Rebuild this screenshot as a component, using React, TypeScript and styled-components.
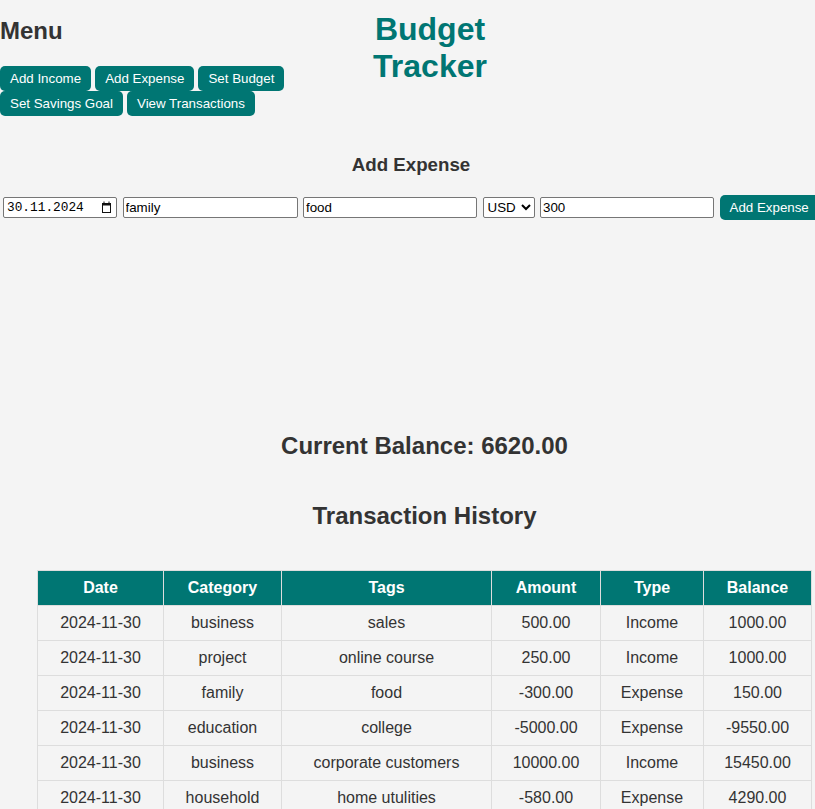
import React from "react";
import styled, { createGlobalStyle } from "styled-components";

const TEAL = "#007673";

const GlobalStyle = createGlobalStyle`
    html, body {
        margin: 0;
        padding: 0;
        overflow: hidden;
        background: #f4f4f4;
        font-family: "Liberation Sans", Arial, sans-serif;
        color: #333;
    }
`;

const Page = styled.div`
    width: 849px;
`;

const Header = styled.header`
    display: flex;
    align-items: flex-start;
`;

const Sidebar = styled.nav`
    width: 290px;

    h2 {
        font-size: 24px;
        margin: 17px 0 21px;
        color: #333;
    }
`;

const MenuButtons = styled.div`
    display: flex;
    flex-wrap: wrap;
    gap: 0 4px;
`;

const Button = styled.button`
    background: ${TEAL};
    color: #fff;
    border: none;
    border-radius: 5px;
    padding: 5px 10px;
    font-family: "Liberation Sans", Arial, sans-serif;
    font-size: 13.33px;
    line-height: 15px;
    cursor: pointer;
`;

const TitleWrap = styled.div`
    flex: 0 0 280px;
    display: flex;
    justify-content: center;
`;

const Title = styled.h1`
    width: min-content;
    margin: 11px 0 0;
    font-size: 32px;
    text-align: center;
    color: ${TEAL};
`;

const FormSection = styled.section`
    margin-top: 38px;

    h3 {
        width: 822px;
        text-align: center;
        font-size: 18.72px;
        margin: 0 0 19px;
    }
`;

const FormRow = styled.div`
    display: flex;
    align-items: center;
    gap: 5.5px;
    padding-left: 3px;
`;

const Field = styled.input<{ $w: number }>`
    box-sizing: border-box;
    width: ${(p) => p.$w}px;
    height: 21px;
    border: 1px solid #767676;
    border-radius: 2px;
    padding: 1px 2px;
    background: #fff;
    font-family: "Liberation Sans", Arial, sans-serif;
    font-size: 13.33px;
    color: #000;
`;

const DateBox = styled.div`
    box-sizing: border-box;
    width: 114px;
    height: 21px;
    border: 1px solid #767676;
    border-radius: 2px;
    background: #fff;
    display: flex;
    align-items: center;
    justify-content: space-between;
    padding: 0 5px 0 3px;
    font-family: "Liberation Mono", "DejaVu Sans Mono", monospace;
    font-size: 12.8px;
    color: #000;
`;

const Select = styled.select`
    box-sizing: border-box;
    width: 52px;
    height: 21px;
    border: 1px solid #767676;
    border-radius: 2px;
    background: #fff;
    font-family: "Liberation Sans", Arial, sans-serif;
    font-size: 13.33px;
    color: #000;
`;

const ChartSpace = styled.div`
    height: 192px;
`;

const Heading = styled.h2<{ $top: number }>`
    margin: ${(p) => p.$top}px 0 0;
    font-size: 24px;
    text-align: center;
    color: #333;
`;

const Table = styled.table`
    margin: 40px 0 0 37px;
    width: 774px;
    border-collapse: collapse;
    table-layout: fixed;
    font-size: 16px;

    th, td {
        border: 1px solid #ddd;
        padding: 8px;
        text-align: center;
        line-height: 18px;
    }

    th {
        background: ${TEAL};
        color: #fff;
        font-weight: bold;
    }

    td {
        color: #333;
    }
`;

const CalendarIcon = () => (
    <svg width="9" height="13" viewBox="0 0 9 13">
        <rect x="0.5" y="2.5" width="8" height="9" fill="none" stroke="#111" />
        <rect x="0.5" y="2.5" width="8" height="2" fill="#111" />
        <rect x="1.5" y="0.5" width="1" height="2" fill="#111" />
        <rect x="6.5" y="0.5" width="1" height="2" fill="#111" />
    </svg>
);

const columns = [
    { label: "Date", width: 126 },
    { label: "Category", width: 118 },
    { label: "Tags", width: 210 },
    { label: "Amount", width: 109 },
    { label: "Type", width: 103 },
    { label: "Balance", width: 108 },
];

const transactions = [
    ["2024-11-30", "business", "sales", "500.00", "Income", "1000.00"],
    ["2024-11-30", "project", "online course", "250.00", "Income", "1000.00"],
    ["2024-11-30", "family", "food", "-300.00", "Expense", "150.00"],
    ["2024-11-30", "education", "college", "-5000.00", "Expense", "-9550.00"],
    ["2024-11-30", "business", "corporate customers", "10000.00", "Income", "15450.00"],
    ["2024-11-30", "household", "home utulities", "-580.00", "Expense", "4290.00"],
];

export default function App() {
    return (
        <Page>
            <GlobalStyle />
            <Header>
                <Sidebar>
                    <h2>Menu</h2>
                    <MenuButtons>
                        <Button>Add Income</Button>
                        <Button>Add Expense</Button>
                        <Button>Set Budget</Button>
                        <Button>Set Savings Goal</Button>
                        <Button>View Transactions</Button>
                    </MenuButtons>
                </Sidebar>
                <TitleWrap>
                    <Title>Budget Tracker</Title>
                </TitleWrap>
            </Header>

            <FormSection>
                <h3>Add Expense</h3>
                <FormRow>
                    <DateBox>
                        <span>30.11.2024</span>
                        <CalendarIcon />
                    </DateBox>
                    <Field $w={175} type="text" defaultValue="family" />
                    <Field $w={174} type="text" defaultValue="food" />
                    <Select defaultValue="USD">
                        <option>USD</option>
                        <option>EUR</option>
                    </Select>
                    <Field $w={174} type="text" defaultValue="300" />
                    <Button>Add Expense</Button>
                </FormRow>
            </FormSection>

            <ChartSpace />

            <Heading $top={20}>Current Balance: 6620.00</Heading>
            <Heading $top={42}>Transaction History</Heading>

            <Table>
                <colgroup>
                    {columns.map((c) => (
                        <col key={c.label} style={{ width: c.width }} />
                    ))}
                </colgroup>
                <thead>
                    <tr>
                        {columns.map((c) => (
                            <th key={c.label}>{c.label}</th>
                        ))}
                    </tr>
                </thead>
                <tbody>
                    {transactions.map((row, i) => (
                        <tr key={i}>
                            {row.map((cell, j) => (
                                <td key={j}>{cell}</td>
                            ))}
                        </tr>
                    ))}
                </tbody>
            </Table>
        </Page>
    );
}
